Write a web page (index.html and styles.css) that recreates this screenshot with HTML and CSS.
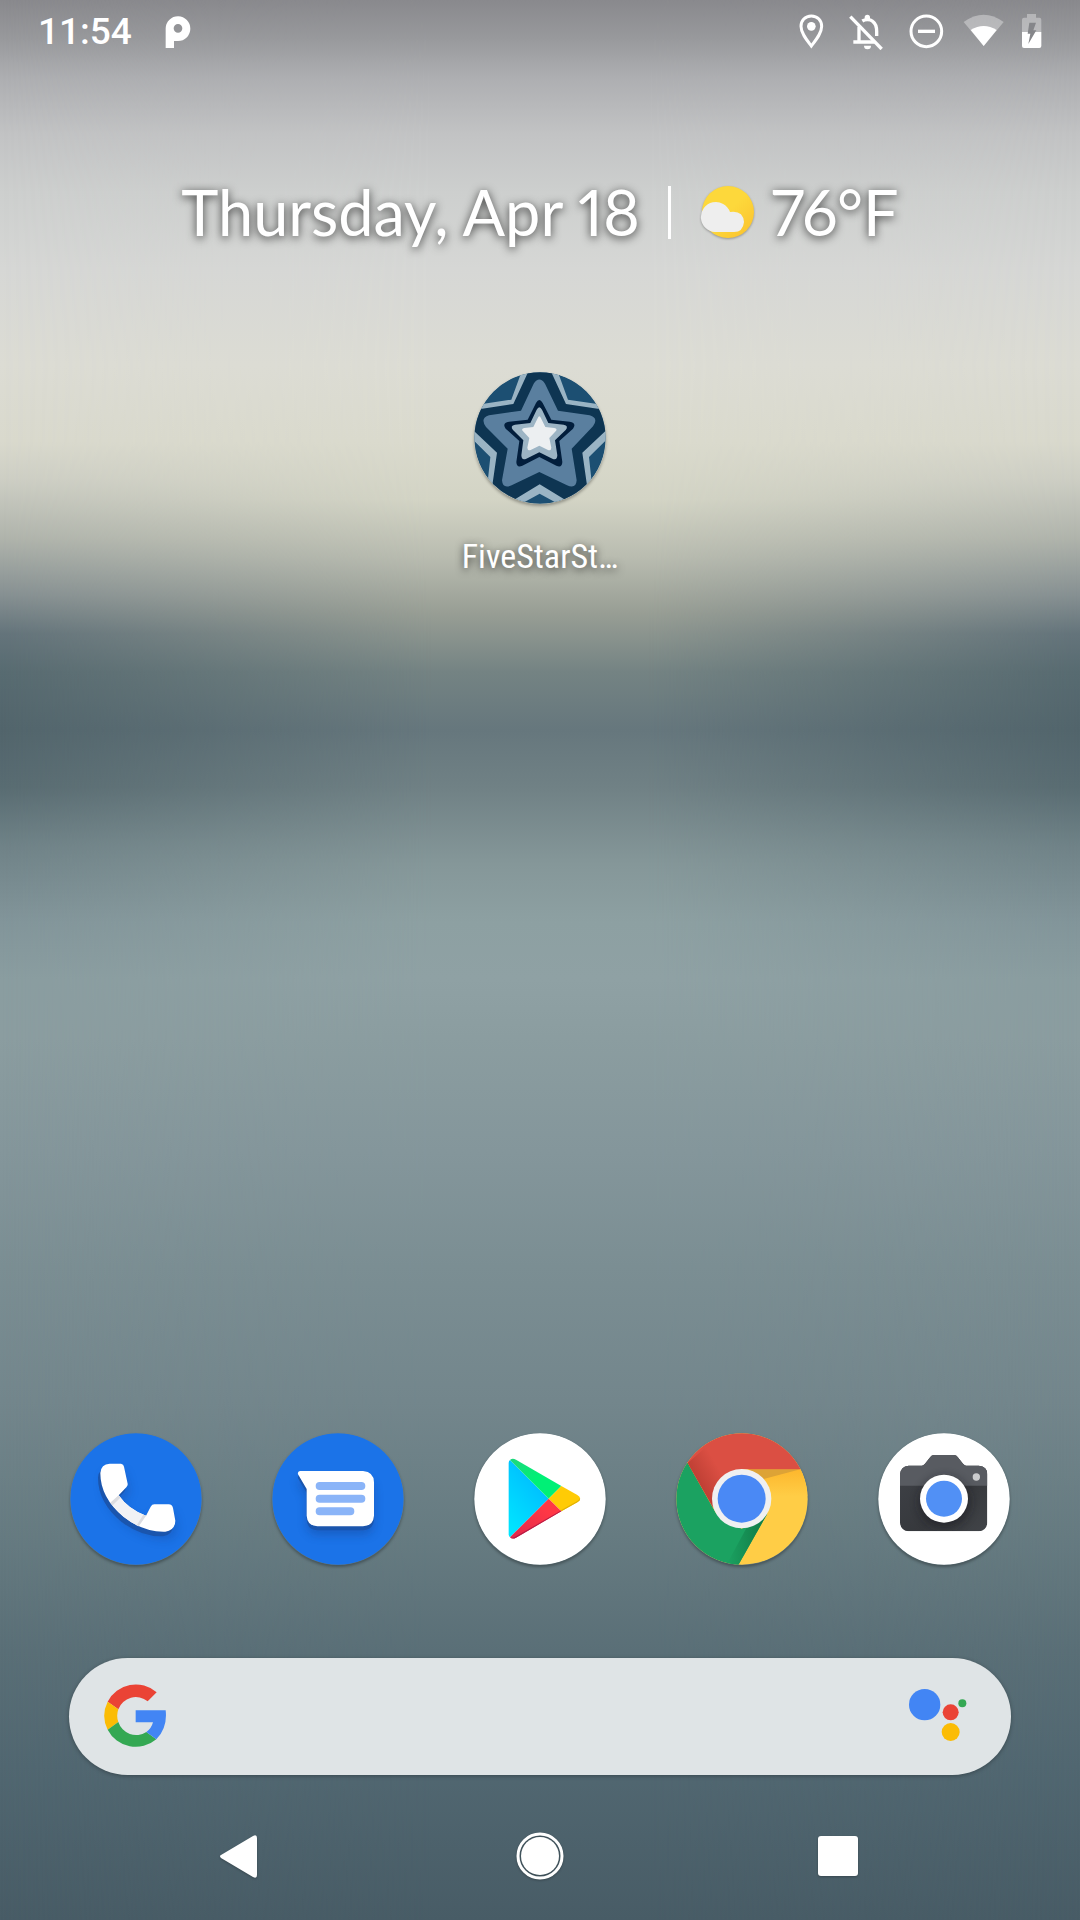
FILE: index.html
```html
<!DOCTYPE html>
<html lang="en">
<head>
<meta charset="utf-8">
<meta name="viewport" content="width=device-width, initial-scale=1">
<title>Home screen</title>
<link rel="stylesheet" href="styles.css">
</head>
<body>
<div class="screen">
  <header class="status">
    <time class="clock">11:54</time>
    <svg class="p-icon" viewBox="495 45 78 102" aria-hidden="true"><path fill="#fff" fill-rule="evenodd" d="M497 144V85A37 37 0 1 1 534 123H522V144ZM534 72A13 13 0 1 0 534 98A13 13 0 1 0 534 72Z"/></svg>
    <div class="status-icons">
      <svg class="st-pin" viewBox="45 42 108 108" aria-hidden="true"><path fill="none" stroke="#fff" stroke-width="9" d="M94 48C75 48 63 62 63 79C63 100 80 120 94 138C108 120 125 100 125 79C125 62 113 48 94 48Z"/><circle cx="94" cy="79" r="13" fill="#fff"/></svg>
      <svg class="st-wide" viewBox="201 42 126 108" aria-hidden="true"><g fill="none" stroke="#fff" stroke-width="10"><path d="M211 50L305 147"/><path d="M237 80V126M220 126H284"/><path d="M247 63C255 58 270 57 278 64C289 72 290 82 290 94V108"/></g><path fill="#fff" d="M254 60V52A8 8 0 0 1 270 52V60ZM252 137H273A10 10 0 0 1 252 137Z"/></svg>
      <svg class="st-wide" viewBox="375 42 126 108" aria-hidden="true"><circle cx="439" cy="94" r="46" fill="none" stroke="#fff" stroke-width="9"/><path fill="#fff" d="M414 89H465V99H414Z"/></svg>
      <svg class="st-wide" viewBox="549 42 126 108" aria-hidden="true"><path fill="#fff" fill-opacity=".35" d="M551 66Q611 22 671 66L611 138Z"/><path fill="#fff" d="M572 90Q611 66 650 90L611 138Z"/></svg>
      <svg class="st-battery" viewBox="723 42 63 108" aria-hidden="true"><path fill="#fff" fill-opacity=".35" d="M741 42H768V53H778Q784 53 784 59V96H726V59Q726 53 732 53H741Z"/><path fill="#fff" d="M726 96H784V138Q784 144 778 144H732Q726 144 726 138Z"/><path fill="#85868a" d="M748 68H768L760 91H769L745 132L751 101H743Z"/></svg>
    </div>
  </header>

  <main class="home">
    <div class="glance">
      <span>Thursday, Apr 18</span>
      <span class="divider"></span>
      <span class="weather">
        <svg class="weather-icon" viewBox="0 0 56 54" aria-hidden="true"><defs><linearGradient id="sun" x1="0" y1="0" x2="1" y2="1"><stop offset=".5" stop-color="#fdd83b"/><stop offset="1" stop-color="#fbc02d"/></linearGradient></defs><circle cx="29" cy="27" r="26" fill="url(#sun)"/><path fill="#eee" d="M16 47A15 15 0 1 1 31 27Q44 25 45 37Q44 47 35 47Z"/></svg>
        <span>76°F</span>
      </span>
    </div>
    <button class="app" type="button">
      <svg class="app-icon" viewBox="71 65 396 396" aria-hidden="true">
        <defs><clipPath id="star-clip"><circle cx="269" cy="263" r="197"/></clipPath></defs>
        <g clip-path="url(#star-clip)">
          <path fill="#1c4f72" d="M60 55H480V475H60Z"/>
          <path fill="#9ab4c4" d="M183 148L217 55H319L353 148L475 166V262L416 320L431 460L386 495L268 430L150 495L105 460L120 320L62 262V166Z"/>
          <path fill="#0e3552" d="M189 161L238 55H298L347 161L480 181V228L396 307L415 440L380 470L268 402L156 470L121 440L140 307L56 228V181Z"/>
          <path fill="#5a7f9f" d="M250 100Q267 75 284 100L323 181L418 195Q446 203 428 228L364 295L379 390Q377 417 350 405L267 365L184 405Q157 417 155 390L172 295L107 230Q88 203 116 195L212 181Z"/>
          <path fill="#021e3c" d="M257 158Q267 140 277 158L303 208L358 214Q380 218 368 235L327 272L336 335Q335 354 318 346L267 320L216 346Q199 354 198 335L207 272L166 235Q154 218 176 214L232 208Z"/>
          <path fill="#9cb4c4" d="M259 178Q267 163 275 178L294 218L340 223Q356 226 346 239L314 270L321 315Q320 332 306 325L267 306L228 325Q214 332 213 315L219 270L188 239Q178 226 194 223L240 218Z"/>
          <path fill="#eceff1" d="M262 204Q267 192 272 204L285 230L312 233Q323 236 316 243L297 263L303 292Q302 303 293 299L267 286L241 299Q232 303 231 292L237 263L218 243Q211 236 222 233L249 230Z"/>
        </g>
      </svg>
      <span class="app-label">FiveStarSt…</span>
    </button>
  </main>

  <nav class="dock" aria-label="Favourite apps">
    <button class="dock-app" type="button" aria-label="Phone">
      <svg class="app-icon" viewBox="59 70 396 396" aria-hidden="true">
        <defs><filter id="soft" x="-30%" y="-30%" width="160%" height="170%"><feGaussianBlur stdDeviation="14"/></filter>
        <path id="handset" d="M150 190Q152 163 178 162H212Q220 163 221 171L232 222Q233 228 228 233L205 257Q235 300 287 318L301 291Q305 284 312 284H355Q366 285 368 295L375 333Q374 362 345 366Q280 368 220 322Q150 264 150 190Z"/></defs>
        <circle cx="257" cy="268" r="197" fill="#1b73e8"/>
        <use href="#handset" x="6" y="24" fill="#12479a" opacity=".35" filter="url(#soft)"/>
        <use href="#handset" x="-7" y="14" fill="#1a55ad"/>
        <use href="#handset" fill="#fff"/>
        <path fill="#f1f2f5" d="M180 279L205 257Q235 300 287 318L265 350Q215 325 180 279Z"/>
        <path fill="#dcdde1" d="M180 279L205 257L210 264L187 287ZM265 350L287 318L279 315L259 347Z"/>
      </svg>
    </button>
    <button class="dock-app" type="button" aria-label="Messages">
      <svg class="app-icon" viewBox="664 70 396 396" aria-hidden="true">
        <defs><path id="bubble" d="M748 184H937Q970 187 970 218V318Q968 348 937 350H800Q770 348 768 318V238L742 194Q740 185 748 184Z"/></defs>
        <circle cx="862" cy="268" r="197" fill="#1b73e8"/>
        <use href="#bubble" y="26" fill="#12479a" opacity=".45" filter="url(#soft)"/>
        <use href="#bubble" y="12" fill="#1a55ad"/>
        <use href="#bubble" fill="#fff"/>
        <g stroke="#8ab4f8" stroke-width="24" stroke-linecap="round"><path d="M807 229H932M807 267H932M807 305H899"/></g>
      </svg>
    </button>
    <button class="dock-app" type="button" aria-label="Play Store">
      <svg class="app-icon" viewBox="41 70 396 396" aria-hidden="true">
        <defs>
          <linearGradient id="play-blue" x1=".8" y1="0" x2=".2" y2="1"><stop offset="0" stop-color="#00b4ff"/><stop offset="1" stop-color="#00e5ff"/></linearGradient>
          <linearGradient id="play-green" x1="0" y1="0" x2=".5" y2=".5"><stop offset="0" stop-color="#1fd67c"/><stop offset="1" stop-color="#00f076"/></linearGradient>
          <linearGradient id="play-red" x1="1" y1="0" x2="0" y2="1"><stop offset=".3" stop-color="#ff3745"/><stop offset="1" stop-color="#e0284c"/></linearGradient>
        </defs>
        <circle cx="239" cy="268" r="197" fill="#fff"/>
        <path fill="url(#play-blue)" d="M149 151L265 267L149 383Q145 380 145 374V160Q145 154 149 151Z"/>
        <path fill="url(#play-green)" d="M149 151Q156 144 167 150L303 229L265 267Z"/>
        <path fill="#ffcb05" d="M303 229L351 256Q368 267 351 278L303 305L265 267Z"/>
        <path fill="url(#play-red)" d="M303 305L167 384Q156 390 149 383L265 267Z"/>
        <path fill="#b71c46" d="M303 302V305L167 384Q156 390 149 383Q158 387 167 380Z"/>
        <path fill="#e0b004" d="M303 301L351 274Q358 270 359 266Q361 273 351 278L303 305Z"/>
      </svg>
    </button>
    <button class="dock-app" type="button" aria-label="Chrome">
      <svg class="app-icon" viewBox="647 70 396 396" aria-hidden="true">
        <defs>
          <clipPath id="chrome-clip"><circle cx="845" cy="268" r="197"/></clipPath>
          <linearGradient id="red-shade" x1="0" y1="1" x2="1" y2="0"><stop offset=".25" stop-color="#b83c31"/><stop offset=".75" stop-color="#db4f43"/></linearGradient>
          <linearGradient id="yellow-shade" x1="0" y1="0" x2="0" y2="1"><stop offset="0" stop-color="#fdb72d"/><stop offset="1" stop-color="#ffcd46"/></linearGradient>
          <linearGradient id="green-shade" x1="0" y1="0" x2="1" y2="0"><stop offset="0" stop-color="#1ba261"/><stop offset=".8" stop-color="#12804a"/></linearGradient>
        </defs>
        <g clip-path="url(#chrome-clip)">
          <path fill="#ffcd46" d="M640 60H1050V470H640Z"/>
          <path fill="url(#yellow-shade)" d="M844 179H1050V260H844Z"/>
          <path fill="#dda336" d="M865 179H1020L910 208Z"/>
          <path fill="#1ba261" d="M682 160L767 311L844 357L921 312L834 466H640V160Z"/>
          <path fill="url(#green-shade)" d="M860 352L921 312L834 466L800 462Z"/>
          <path fill="#db4f43" d="M682 160L640 60H1050V179H844V268H760V295Z"/>
          <path fill="url(#red-shade)" d="M682 160L740 110L790 205L757 292Z"/>
        </g>
        <circle cx="844" cy="267" r="89" fill="#f0f0f1"/>
        <circle cx="844" cy="267" r="72" fill="#4a89f5"/>
      </svg>
    </button>
    <button class="dock-app" type="button" aria-label="Camera">
      <svg class="app-icon" viewBox="52 70 396 396" aria-hidden="true">
        <defs>
          <linearGradient id="body" x1="0" y1="0" x2="1" y2="1"><stop offset="0" stop-color="#404349"/><stop offset=".6" stop-color="#36383c"/><stop offset="1" stop-color="#424549"/></linearGradient>
          <clipPath id="camera-clip"><path id="camera" d="M144 168H184Q189 167 193 162L209 142Q213 136 220 136H280Q287 136 291 142L307 162Q311 167 316 168H354Q380 170 380 194V339Q378 363 354 365H144Q120 363 118 339V194Q120 170 144 168Z"/></clipPath>
        </defs>
        <circle cx="250" cy="268" r="197" fill="#fff"/>
        <g clip-path="url(#camera-clip)">
          <path fill="url(#body)" d="M110 130H390V370H110Z"/>
          <path fill="#585b61" d="M110 130H390V228H110Z"/>
          <circle cx="252" cy="278" r="76" fill="#1c1d20" opacity=".6" filter="url(#soft)"/>
        </g>
        <circle cx="347" cy="202" r="11" fill="#cbccce"/>
        <circle cx="250" cy="267" r="72" fill="#fff"/>
        <circle cx="250" cy="267" r="54" fill="#5190f5"/>
      </svg>
    </button>
  </nav>

  <form class="search" role="search">
    <svg class="g-logo" viewBox="161 131 189 198" aria-hidden="true">
      <path fill="#ea4335" d="M172 184A95 95 0 0 1 319 156L292 183A56 56 0 0 0 204 207Z"/>
      <path fill="#fbbc05" d="M172 184A94 94 0 0 0 172 268L204 245A56 56 0 0 1 204 207Z"/>
      <path fill="#34a853" d="M172 268A95 95 0 0 0 318 297L288 275A56 56 0 0 1 204 245Z"/>
      <path fill="#4285f4" d="M256 210H346Q352 262 318 297L288 275Q303 265 308 246H256Z"/>
    </svg>
    <input class="search-input" type="text" aria-label="Search">
    <button class="assistant" type="button" aria-label="Assistant">
      <svg class="assistant-icon" viewBox="145 147 174 168" aria-hidden="true"><circle cx="192" cy="194" r="47" fill="#4285f4"/><circle cx="270" cy="217" r="24" fill="#ea4335"/><circle cx="305" cy="190" r="12" fill="#34a853"/><circle cx="270" cy="276" r="27" fill="#fbbc05"/></svg>
    </button>
  </form>

  <nav class="navbar" aria-label="System">
    <button class="nav-button" type="button" aria-label="Back"><svg class="nav-icon" viewBox="0 0 48 48" aria-hidden="true"><path fill="#fff" d="M3 23L35 4Q39 2 39 6V43Q39 47 35 45L3 26Q1 24 3 23Z"/></svg></button>
    <button class="nav-button" type="button" aria-label="Home"><svg class="nav-icon" viewBox="0 0 48 48" aria-hidden="true"><circle cx="24" cy="24" r="22" fill="none" stroke="#fff" stroke-width="3"/><circle cx="24" cy="24" r="19" fill="#fff"/></svg></button>
    <button class="nav-button" type="button" aria-label="Recent apps"><svg class="nav-icon" viewBox="0 0 48 48" aria-hidden="true"><rect x="4" y="4" width="40" height="40" rx="3" fill="#fff"/></svg></button>
  </nav>
</div>
</body>
</html>
```
FILE: styles.css
```css
* { box-sizing: border-box; }

body {
  margin: 0;
  font-family: Roboto, "Noto Sans", sans-serif;
  color: #fff;
}

button, input {
  font: inherit;
  color: inherit;
  background: none;
  border: 0;
  padding: 0;
}

svg { display: block; flex: none; }

/* The wallpaper: darker towards the sides, lighter in the middle */
.screen {
  position: relative;
  isolation: isolate;
  display: flex;
  flex-direction: column;
  min-height: 100vh;
  background: linear-gradient(#89898d 0, #98999c 2%, #adaeb1 4%, #c2c3c4 7%, #cdcfce 10%, #d6d7d5 14%, #dcdcd4 19%, #d9d9cd 23%, #cdcec4 25%, #b0b4ac 28%, #869092 31%, #64747b 33%, #586b71 35%, #52656c 38%, #596c72 41%, #6f8287 44%, #82959a 48%, #8a9da0 51%, #8b9da0 54%, #84969b 60%, #7b8e93 66%, #73868c 73%, #667b81 80%, #5a6f77 86%, #516771 92%, #485c66);
}

.screen::before {
  content: "";
  position: absolute;
  inset: 0;
  z-index: -1;
  background: linear-gradient(#89898d 0, #98999c 2%, #adaeb1 4%, #c2c3c4 7%, #cdcfce 10%, #d6d7d5 14%, #dcdcd4 19%, #dadacd 23%, #d3d4c5 26%, #b9bcb0 29%, #979d94 32%, #748383 35%, #66777d 38%, #708185 41%, #859799 45%, #8da0a2 48%, #8fa1a4 51%, #8b9da0 54%, #84969b 60%, #7b8e93 66%, #73868c 73%, #667b81 80%, #5a6f77 86%, #516771 92%, #485c66);
  mask-image: linear-gradient(to right, transparent, #000 40%, #000 60%, transparent);
}

.status {
  display: flex;
  align-items: center;
  height: 64px;
  padding: 0 38px;
  gap: 33px;
}

.clock { font-size: 37px; font-weight: 500; line-height: 42px; }
.p-icon { width: 26px; height: 34px; }
.status-icons { display: flex; gap: 16px; margin-left: auto; }
.st-pin { width: 36px; height: 36px; }
.st-wide { width: 42px; height: 36px; }
.st-battery { width: 21px; height: 36px; }

.home {
  flex: 1;
  display: flex;
  flex-direction: column;
  align-items: center;
  padding-top: 108px;
}

.glance {
  display: flex;
  align-items: center;
  gap: 28px;
  height: 80px;
  font-family: Lato, "Open Sans", sans-serif;
  font-size: 63px;
  font-variant-numeric: proportional-nums;
  line-height: 80px;
  white-space: nowrap;
  text-shadow: 0 2px 10px rgba(0, 0, 0, .75);
}

.divider { width: 3px; height: 53px; background: #fff; }
.weather { display: flex; align-items: center; gap: 16px; }
.weather-icon { width: 56px; height: 54px; filter: drop-shadow(0 1px 1px rgba(0, 0, 0, .3)); }

.app {
  display: flex;
  flex-direction: column;
  align-items: center;
  gap: 32px;
  margin-top: 120px;
}

.app-label {
  font-family: "Roboto Condensed", Roboto, sans-serif;
  font-size: 34px;
  line-height: 40px;
  text-shadow: 0 2px 8px rgba(0, 0, 0, .75);
}

.app-icon {
  width: 132px;
  height: 132px;
  border-radius: 50%;
  box-shadow: 0 2px 3px rgba(0, 0, 0, .3);
}

.dock {
  display: grid;
  grid-template-columns: repeat(5, 1fr);
  padding: 0 35px;
  margin-bottom: 93px;
}

.dock-app { display: flex; justify-content: center; }

.search {
  display: flex;
  align-items: center;
  height: 117px;
  margin: 0 69px 17px;
  padding: 0 44px 0 35px;
  border-radius: 59px;
  background: #dfe4e6;
  box-shadow: 0 1px 4px rgba(0, 0, 0, .3);
}

.g-logo { width: 63px; height: 66px; }
.search-input { flex: 1; min-width: 0; height: 64px; padding: 0 24px; color: #3c4043; font-size: 36px; outline: 0; }
.assistant-icon { width: 58px; height: 56px; }

.navbar {
  display: flex;
  justify-content: center;
  height: 128px;
}

.nav-button {
  display: flex;
  flex: 0 1 298px;
  align-items: center;
  justify-content: center;
}

.nav-icon { width: 48px; height: 48px; filter: drop-shadow(0 1px 1px rgba(0, 0, 0, .25)); }
```
